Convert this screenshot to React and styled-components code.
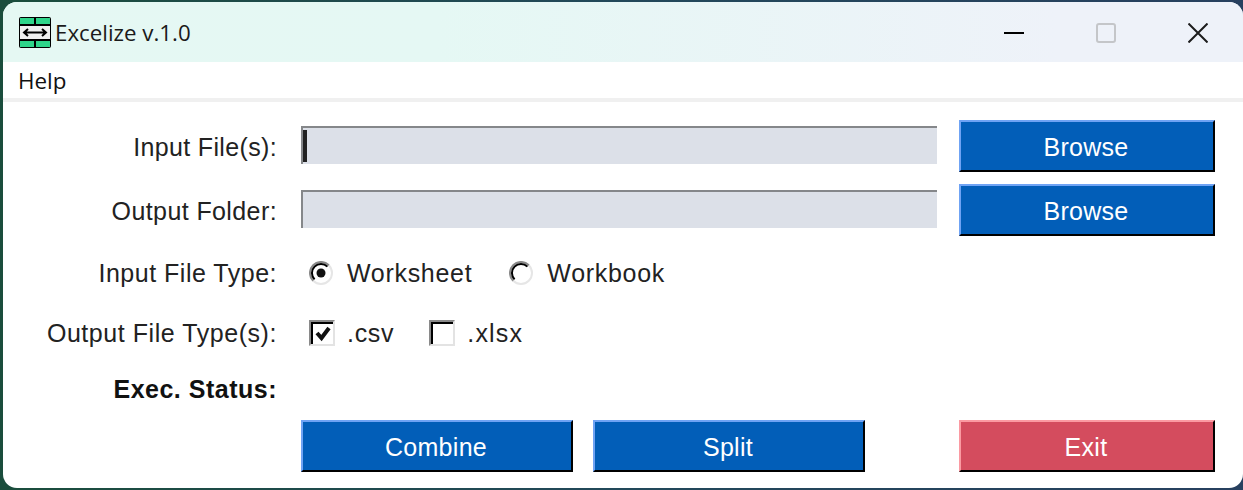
import React from "react";
import styled, { createGlobalStyle } from "styled-components";

const GlobalStyle = createGlobalStyle`
  html, body {
    margin: 0;
    padding: 0;
    height: 100%;
    overflow: hidden;
  }
  body {
    background: linear-gradient(90deg, #1a4d3c 0%, #22485a 50%, #27405f 100%);
    font-family: "Liberation Sans", Arial, sans-serif;
  }
`;

const Desktop = styled.div`
  width: 1243px;
  height: 490px;
  padding: 2px 0 2px 3px;
  box-sizing: border-box;
`;

const Window = styled.div`
  height: 486px;
  background: #fff;
  border-radius: 14px;
  overflow: hidden;
  display: flex;
  flex-direction: column;
`;

const TitleBar = styled.div`
  height: 60px;
  flex: none;
  display: flex;
  align-items: center;
  padding-left: 15px;
  background: linear-gradient(90deg, #e5f8f3 0%, #e5f8f4 35%, #eef2f9 85%);
`;

const Title = styled.span`
  margin-left: 3px;
  font-family: "Open Sans", sans-serif;
  font-size: 22.3px;
  color: #1a1a1a;
`;

const WinButtons = styled.div`
  margin-left: auto;
  margin-right: 35px;
  display: flex;
  align-items: center;
  gap: 72px;
  padding-top: 1px;
`;

const MenuBar = styled.div`
  height: 36px;
  flex: none;
  display: flex;
  align-items: center;
  padding-left: 15px;
  border-bottom: 4px solid #f0f0f0;
  font-family: "Open Sans", sans-serif;
  font-size: 22.4px;
  color: #111;
`;

const Form = styled.div`
  display: grid;
  grid-template-columns: 276px 636px 256px;
  grid-template-rows: 52px 52px 50px 46px 40px 52px;
  column-gap: 22px;
  row-gap: 12px;
  padding-top: 18px;
`;

const Label = styled.div`
  grid-column: ${(p) => (p.$wide ? "1 / -1" : "1")};
  justify-self: start;
  align-self: center;
  width: 276px;
  box-sizing: border-box;
  padding-right: 2px;
  padding-top: ${(p) => (p.$nudge ? 2 : 0)}px;
  text-align: right;
  font-size: 25px;
  letter-spacing: ${(p) => p.$spacing}px;
  color: ${(p) => (p.$bold ? "#111" : "#222")};
  font-weight: ${(p) => (p.$bold ? 700 : 400)};
  white-space: nowrap;
`;

const Field = styled.div`
  height: 38px;
  margin-top: 6px;
  box-sizing: border-box;
  display: flex;
  align-items: center;
  background: #dce0e8;
  border-top: 2px solid #85878a;
  border-left: 2px solid #85878a;
`;

const Caret = styled.div`
  width: 4px;
  height: 32px;
  background: #222;
`;

const Button = styled.button`
  height: 52px;
  width: ${(p) => p.$width || "100%"};
  box-sizing: border-box;
  padding: 2px 2px 0 0;
  font-family: "Liberation Sans", Arial, sans-serif;
  font-size: 25px;
  letter-spacing: 0.3px;
  color: #fff;
  background: ${(p) => (p.$danger ? "#d44c5e" : "#025eb8")};
  border-style: solid;
  border-width: 2px;
  border-color: ${(p) => (p.$danger ? "#fb9aa2" : "#6fa3f4")} #000 #000
    ${(p) => (p.$danger ? "#fb9aa2" : "#6fa3f4")};
`;

const Options = styled.div`
  grid-column: 2 / 4;
  display: flex;
  align-items: center;
  padding-left: 8px;
`;

const Option = styled.div`
  display: flex;
  align-items: center;
  font-size: 25px;
  letter-spacing: ${(p) => p.$spacing || 0.7}px;
  color: #222;
  margin-right: ${(p) => p.$gap || 0}px;
`;

const OptionText = styled.span`
  margin-left: ${(p) => p.$indent}px;
`;

const Box = styled.div`
  width: 26px;
  height: 26px;
  box-sizing: border-box;
  background: #fff;
  border-style: solid;
  border-width: 2px;
  border-color: #8a8a8a #e3e3e3 #e3e3e3 #8a8a8a;
  display: flex;
`;

const BoxInner = styled.div`
  flex: 1;
  border-top: 2px solid #000;
  border-left: 2px solid #000;
  display: flex;
  align-items: center;
  justify-content: center;
`;

const ActionRow = styled.div`
  grid-column: 2;
  display: flex;
  gap: 20px;
`;

const AppIcon = () => (
  <svg width="34" height="33" viewBox="0 0 34 33">
    <rect x="1" y="1" width="32" height="31" rx="2" fill="#000" />
    <rect x="2" y="2" width="14" height="6" fill="#2fd58a" />
    <rect x="18" y="2" width="14" height="6" fill="#2fd58a" />
    <rect x="2" y="10" width="30" height="13" fill="#efefef" />
    <rect x="2" y="25" width="14" height="6" fill="#2fd58a" />
    <rect x="18" y="25" width="14" height="6" fill="#2fd58a" />
    <path d="M6 16.5h22M10 13l-4 3.5 4 3.5M24 13l4 3.5-4 3.5" fill="none" stroke="#000" strokeWidth="2" />
  </svg>
);

const MinimizeIcon = () => (
  <svg width="20" height="20" viewBox="0 0 20 20">
    <rect x="0" y="9" width="20" height="2" fill="#000" />
  </svg>
);

const MaximizeIcon = () => (
  <svg width="20" height="20" viewBox="0 0 20 20">
    <rect x="1" y="1" width="18" height="18" rx="2" fill="none" stroke="#c4c6c9" strokeWidth="2" />
  </svg>
);

const CloseIcon = () => (
  <svg width="20" height="20" viewBox="0 0 20 20">
    <path d="M0.5 0.5l19 19M19.5 0.5l-19 19" fill="none" stroke="#1c1c1c" strokeWidth="2" />
  </svg>
);

const Radio = ({ checked }) => (
  <svg width="24" height="24" viewBox="0 0 24 24">
    <circle cx="12" cy="12" r="11" fill="none" stroke="#e6e6e6" strokeWidth="2" />
    <path d="M4.2 19.8A11 11 0 0 1 19.8 4.2" fill="none" stroke="#8a8a8a" strokeWidth="2" />
    <path d="M5.6 18.4A9 9 0 0 1 18.4 5.6" fill="none" stroke="#000" strokeWidth="2" />
    {checked && <circle cx="12" cy="12" r="4.5" fill="#111" />}
  </svg>
);

const Check = () => (
  <svg width="20" height="20" viewBox="0 0 20 20">
    <path d="M4 9l4.5 5L16 4" fill="none" stroke="#111" strokeWidth="4" />
  </svg>
);

const Checkbox = ({ checked }) => (
  <Box>
    <BoxInner>{checked && <Check />}</BoxInner>
  </Box>
);

const App = () => {
  return (
    <Desktop>
      <GlobalStyle />
      <Window>
        <TitleBar>
          <AppIcon />
          <Title>Excelize v.1.0</Title>
          <WinButtons>
            <MinimizeIcon />
            <MaximizeIcon />
            <CloseIcon />
          </WinButtons>
        </TitleBar>
        <MenuBar>Help</MenuBar>
        <Form>
          <Label $nudge $spacing={0.35}>Input File(s):</Label>
          <Field>
            <Caret />
          </Field>
          <Button>Browse</Button>

          <Label $nudge $spacing={0.4}>Output Folder:</Label>
          <Field />
          <Button>Browse</Button>

          <Label $spacing={0.5}>Input File Type:</Label>
          <Options>
            <Option $gap={37}>
              <Radio checked />
              <OptionText $indent={14}>Worksheet</OptionText>
            </Option>
            <Option>
              <Radio />
              <OptionText $indent={14}>Workbook</OptionText>
            </Option>
          </Options>

          <Label $spacing={0.55}>Output File Type(s):</Label>
          <Options>
            <Option $gap={35}>
              <Checkbox checked />
              <OptionText $indent={12}>.csv</OptionText>
            </Option>
            <Option $spacing={1.2}>
              <Checkbox />
              <OptionText $indent={12}>.xlsx</OptionText>
            </Option>
          </Options>

          <Label $bold $nudge $wide $spacing={0.5}>
            Exec. Status:
          </Label>

          <ActionRow>
            <Button $width="272px">Combine</Button>
            <Button $width="272px">Split</Button>
          </ActionRow>
          <Button $danger>Exit</Button>
        </Form>
      </Window>
    </Desktop>
  );
};

export default App;
